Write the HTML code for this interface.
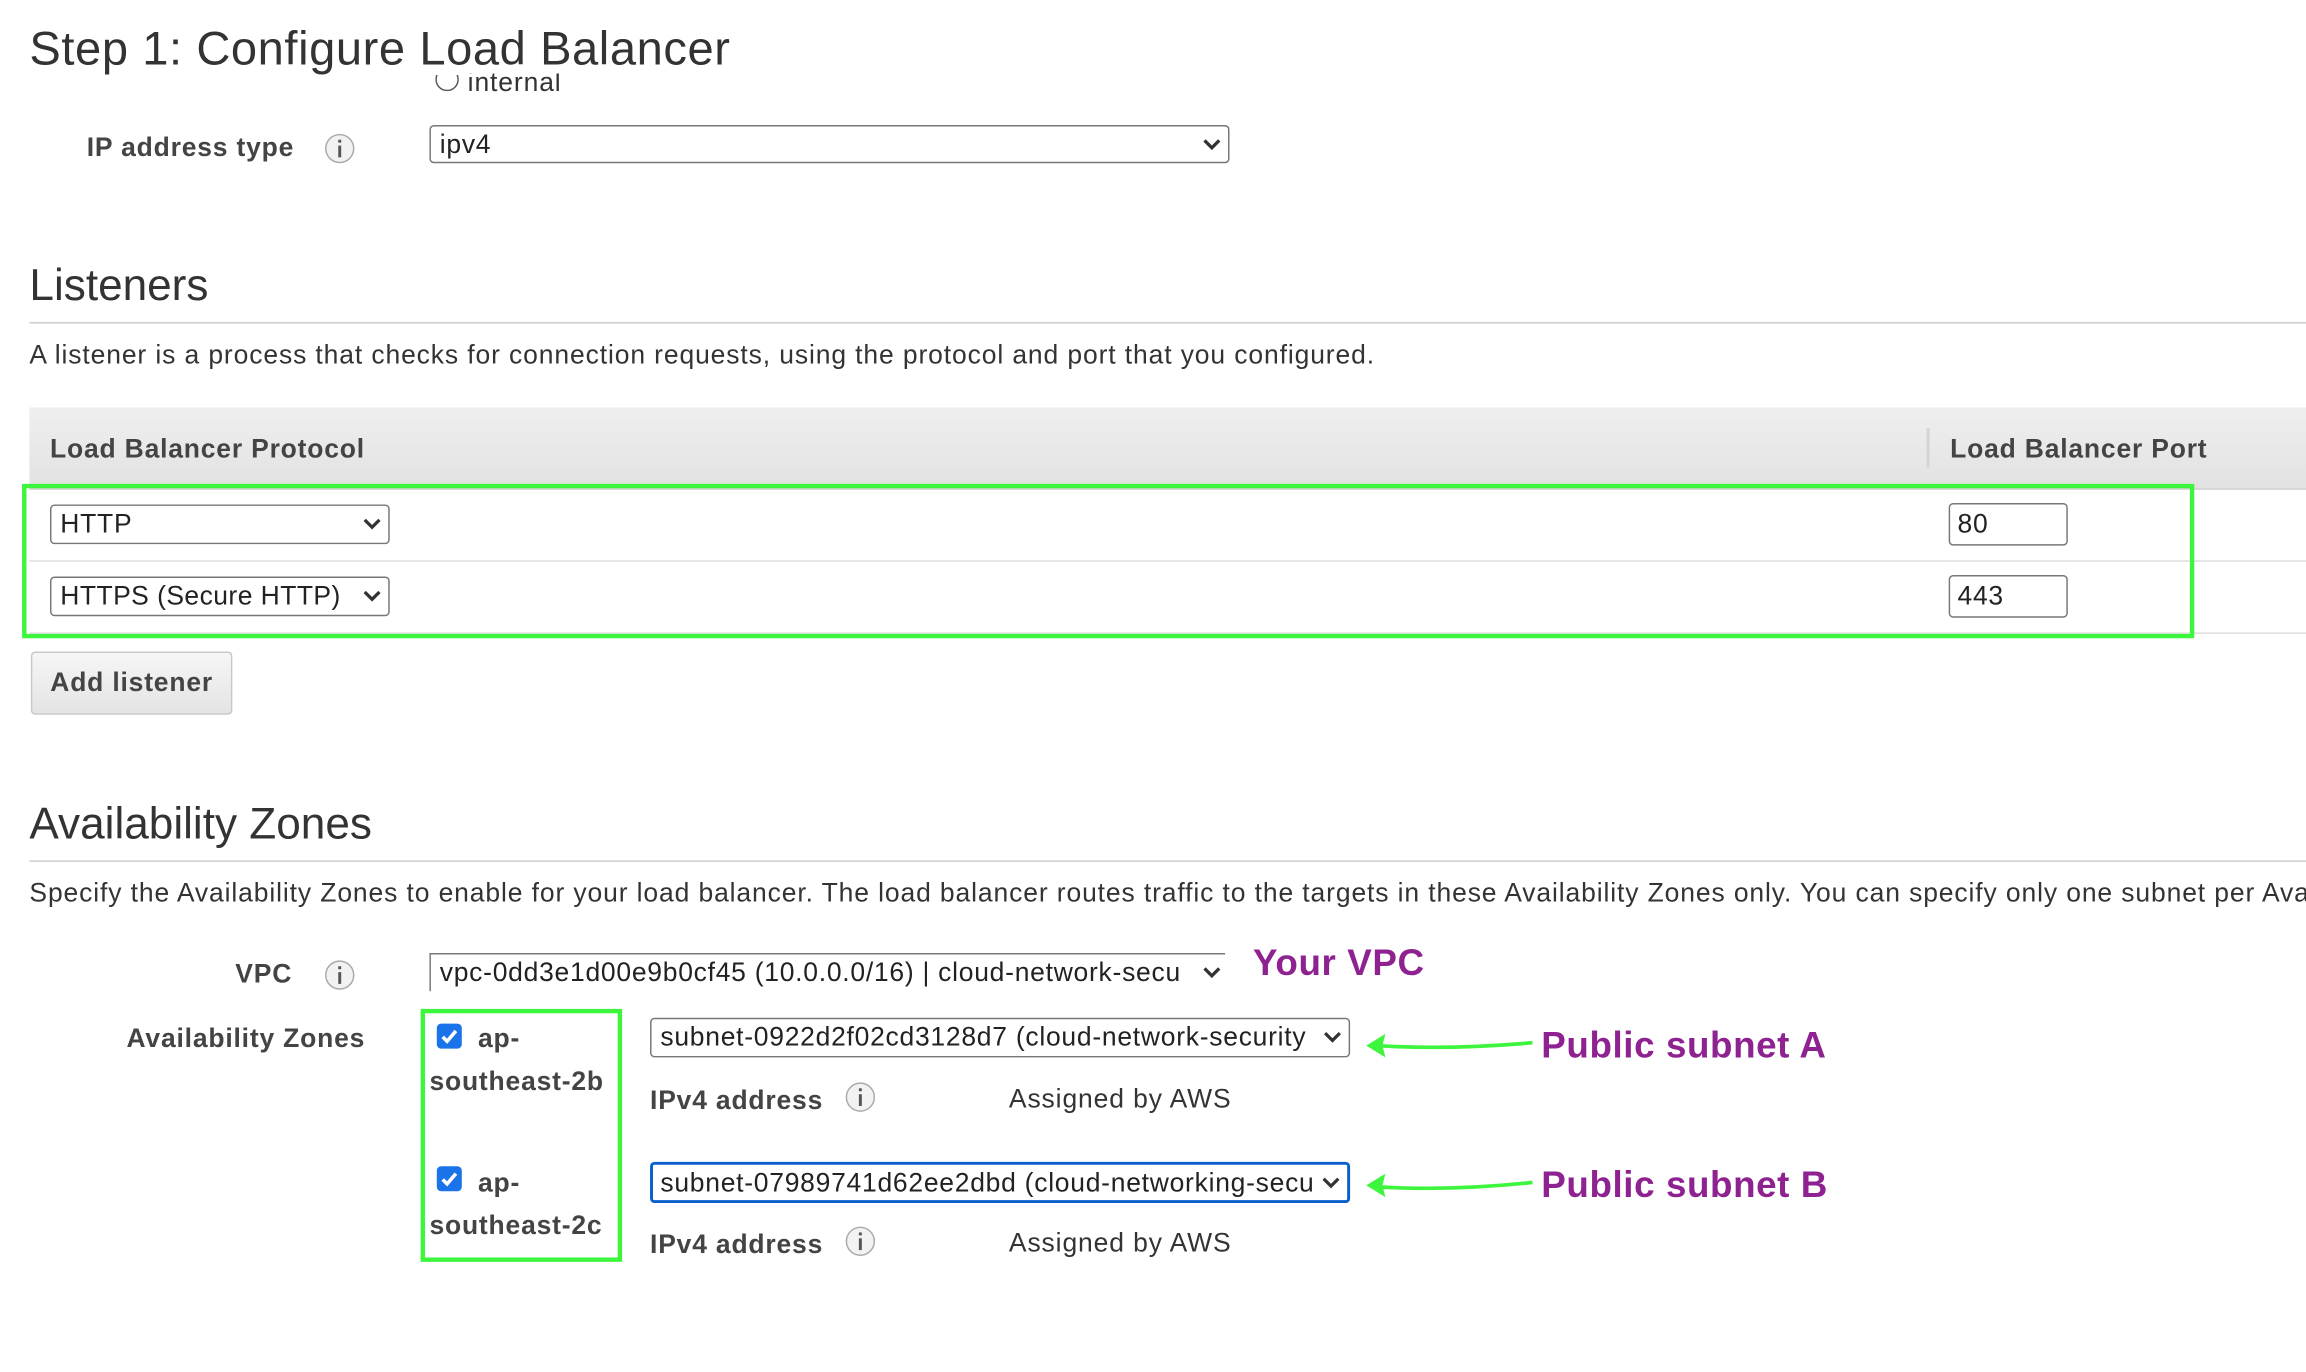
<!DOCTYPE html>
<html><head><meta charset="utf-8"><style>
html,body{margin:0;padding:0;background:#fff;overflow:hidden;width:2306px;height:1372px}
#w{position:absolute;left:0;top:0;width:1568px;height:933px;transform:scale(1.4707);transform-origin:0 0;font-family:"Liberation Sans",Arial,sans-serif;color:#333;overflow:hidden}
.a{position:absolute;white-space:nowrap}
.t{letter-spacing:0.6px}
.b{font-weight:bold;color:#444;letter-spacing:0.55px}
.sel{position:absolute;box-sizing:border-box;border:1px solid #777;border-radius:3px;background:#fff;font-size:18px;color:#222;padding-left:6px;padding-right:24px;line-height:24px;overflow:hidden;white-space:nowrap;letter-spacing:0.5px}
.sel svg{position:absolute;right:5px;top:8px}
.inp{position:absolute;box-sizing:border-box;border:1px solid #777;border-radius:3px;font-size:18px;color:#222;padding-left:5px;line-height:26px;letter-spacing:0.5px}
.info{position:absolute;width:20px;height:20px;border:1.5px solid #aaa;border-radius:50%;background:#f2f2f2;box-sizing:border-box}
.info:before{content:"";position:absolute;left:8px;top:3px;width:2px;height:2px;background:#555}
.info:after{content:"";position:absolute;left:8px;top:7px;width:2px;height:8px;background:#555}
.hr{position:absolute;left:20px;right:0;height:1px;background:#ccc}
.chk{position:absolute;width:17px;height:17px;background:#1a73e8;border-radius:3px}
.pur{color:#8e2290;font-weight:bold;font-size:25px;letter-spacing:0.4px}
</style></head><body><div id="w">
<div class="a" style="left:20px;top:14px;font-size:32px;line-height:38px;color:#333;letter-spacing:0.4px">Step 1: Configure Load Balancer</div>
<div class="a" style="left:296px;top:46px;width:14px;height:14px;border:1.3px solid #555;border-radius:50%;clip-path:inset(5px 0 0 0)"></div>
<div class="a t" style="left:318px;top:45px;font-size:18px;line-height:22px;clip-path:inset(5px 0 0 0)">internal</div>

<div class="a b" style="left:59px;top:89px;font-size:18px;line-height:22px">IP address type</div>
<div class="info" style="left:221px;top:91px"></div>
<div class="sel" style="left:292px;top:85px;width:544px;height:26px">ipv4<svg width="12" height="9" viewBox="0 0 12 9"><path d="M1 1.5 6 6.5 11 1.5" stroke="#333" stroke-width="2.2" fill="none"/></svg></div>

<div class="a" style="left:20px;top:177px;font-size:30px;line-height:36px">Listeners</div>
<div class="hr" style="top:219px"></div>
<div class="a t" style="left:20px;top:230px;font-size:18px;line-height:22px">A listener is a process that checks for connection requests, using the protocol and port that you configured.</div>

<div class="a" style="left:20px;top:277px;width:1548px;height:55px;background:linear-gradient(#efefef,#e2e2e2);border-bottom:1px solid #ccc"></div>
<div class="a b" style="left:34px;top:294px;font-size:18px;line-height:22px">Load Balancer Protocol</div>
<div class="a" style="left:1310px;top:291px;width:2px;height:27px;background:#d4d4d4"></div>
<div class="a b" style="left:1326px;top:294px;font-size:18px;line-height:22px">Load Balancer Port</div>
<div class="a" style="left:20px;top:381px;width:1548px;height:1px;background:#ddd"></div>
<div class="a" style="left:20px;top:430px;width:1548px;height:1px;background:#ddd"></div>
<div class="sel" style="left:34px;top:343px;width:231px;height:27px">HTTP<svg width="12" height="9" viewBox="0 0 12 9"><path d="M1 1.5 6 6.5 11 1.5" stroke="#333" stroke-width="2.2" fill="none"/></svg></div>
<div class="sel" style="left:34px;top:392px;width:231px;height:27px;letter-spacing:0.3px">HTTPS (Secure HTTP)<svg width="12" height="9" viewBox="0 0 12 9"><path d="M1 1.5 6 6.5 11 1.5" stroke="#333" stroke-width="2.2" fill="none"/></svg></div>
<div class="inp" style="left:1325px;top:342px;width:81px;height:29px">80</div>
<div class="inp" style="left:1325px;top:391px;width:81px;height:29px">443</div>
<div class="a" style="left:15px;top:329px;width:1471px;height:99px;border:3px solid #3df53d"></div>

<div class="a b" style="left:21px;top:443px;width:137px;height:43px;box-sizing:border-box;border:1px solid #c8c8c8;border-radius:3px;background:linear-gradient(#f6f6f6,#e4e4e4);font-size:18px;line-height:41px;text-align:center;color:#444">Add listener</div>

<div class="a" style="left:20px;top:543px;font-size:30px;line-height:36px">Availability Zones</div>
<div class="hr" style="top:585px"></div>
<div class="a t" style="left:20px;top:596px;font-size:18px;line-height:22px">Specify the Availability Zones to enable for your load balancer. The load balancer routes traffic to the targets in these Availability Zones only. You can specify only one subnet per Availability Zone.</div>

<div class="a b" style="left:160px;top:651px;font-size:18px;line-height:22px">VPC</div>
<div class="info" style="left:221px;top:653px"></div>
<div class="a" style="left:292px;top:648px;width:541px;height:26px;border-top:1.5px solid #777;border-left:1px solid #777;box-sizing:border-box;font-size:18px;line-height:25px;padding-left:6px;padding-right:22px;color:#222;overflow:hidden;white-space:nowrap;letter-spacing:0.5px">vpc-0dd3e1d00e9b0cf45 (10.0.0.0/16) | cloud-network-secu<svg style="position:absolute;right:3px;top:8px" width="12" height="9" viewBox="0 0 12 9"><path d="M1 1.5 6 6.5 11 1.5" stroke="#333" stroke-width="2.2" fill="none"/></svg></div>
<div class="a pur" style="left:852px;top:640px;line-height:30px">Your VPC</div>

<div class="a b" style="left:86px;top:695px;font-size:18px;line-height:22px">Availability Zones</div>
<div class="a" style="left:286px;top:686px;width:131px;height:166px;border:3px solid #3df53d"></div>
<div class="chk" style="left:297px;top:696px"><svg width="17" height="17" viewBox="0 0 17 17"><path d="M4 9 7 12 13 5" stroke="#fff" stroke-width="2.4" fill="none"/></svg></div>
<div class="a b" style="left:325px;top:695px;font-size:18px;line-height:22px">ap-</div>
<div class="a b" style="left:292px;top:724px;font-size:18px;line-height:22px">southeast-2b</div>
<div class="chk" style="left:297px;top:793px"><svg width="17" height="17" viewBox="0 0 17 17"><path d="M4 9 7 12 13 5" stroke="#fff" stroke-width="2.4" fill="none"/></svg></div>
<div class="a b" style="left:325px;top:793px;font-size:18px;line-height:22px">ap-</div>
<div class="a b" style="left:292px;top:822px;font-size:18px;line-height:22px">southeast-2c</div>

<div class="sel" style="left:442px;top:692px;width:476px;height:27px">subnet-0922d2f02cd3128d7 (cloud-network-security<svg width="12" height="9" viewBox="0 0 12 9"><path d="M1 1.5 6 6.5 11 1.5" stroke="#333" stroke-width="2.2" fill="none"/></svg></div>
<div class="sel" style="left:442px;top:790px;width:476px;height:28px;border:2px solid #0a5fcc;line-height:24px;padding-left:5px">subnet-07989741d62ee2dbd (cloud-networking-secu<svg width="12" height="9" viewBox="0 0 12 9"><path d="M1 1.5 6 6.5 11 1.5" stroke="#333" stroke-width="2.2" fill="none"/></svg></div>

<div class="a b" style="left:442px;top:737px;font-size:18px;line-height:22px">IPv4 address</div>
<div class="info" style="left:575px;top:736px"></div>
<div class="a t" style="left:686px;top:736px;font-size:18px;line-height:22px">Assigned by AWS</div>
<div class="a b" style="left:442px;top:835px;font-size:18px;line-height:22px">IPv4 address</div>
<div class="info" style="left:575px;top:834px"></div>
<div class="a t" style="left:686px;top:834px;font-size:18px;line-height:22px">Assigned by AWS</div>

<svg class="a" style="left:925px;top:695px" width="125" height="125" viewBox="0 0 125 125">
<path d="M12 16 Q60 19 117 14" stroke="#3df53d" stroke-width="2.5" fill="none"/>
<path d="M4 16 L17 8 L15 16 L17 24 Z" fill="#3df53d"/>
<path d="M12 112 Q60 115 117 109" stroke="#3df53d" stroke-width="2.5" fill="none"/>
<path d="M4 111 L17 103 L15 111 L17 119 Z" fill="#3df53d"/>
</svg>
<div class="a pur" style="left:1048px;top:696px;line-height:30px">Public subnet A</div>
<div class="a pur" style="left:1048px;top:791px;line-height:30px">Public subnet B</div>
</div></body></html>
